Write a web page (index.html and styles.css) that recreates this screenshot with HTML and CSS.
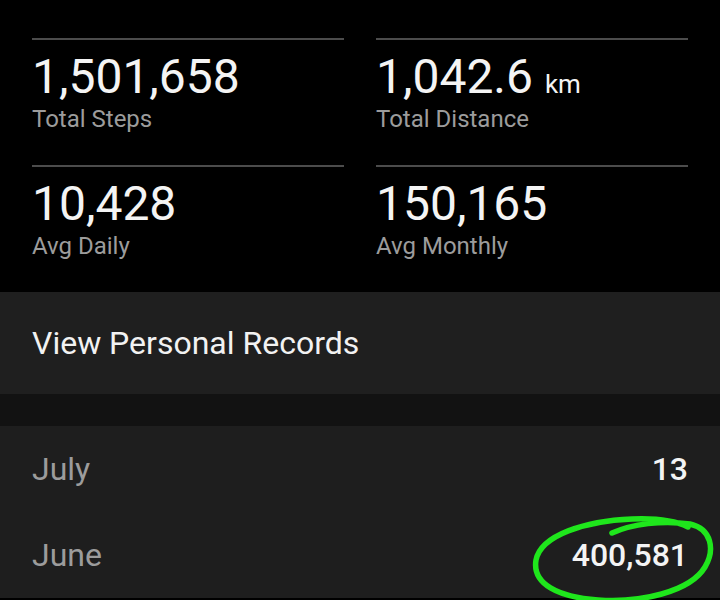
FILE: index.html
```html
<!DOCTYPE html>
<html lang="en">
<head>
<meta charset="utf-8">
<title>Steps Summary</title>
<link rel="stylesheet" href="styles.css">
</head>
<body>
<div class="screen">
  <section class="stats">
    <div class="stat">
      <div class="value">1,501,658</div>
      <div class="label">Total Steps</div>
    </div>
    <div class="stat">
      <div class="value">1,042.6 <span class="unit">km</span></div>
      <div class="label">Total Distance</div>
    </div>
    <div class="stat">
      <div class="value">10,428</div>
      <div class="label">Avg Daily</div>
    </div>
    <div class="stat">
      <div class="value">150,165</div>
      <div class="label">Avg Monthly</div>
    </div>
  </section>
  <div class="records">View Personal Records</div>
  <div class="spacer"></div>
  <ul class="months">
    <li class="month"><span class="name">July</span><span class="count">13</span></li>
    <li class="month"><span class="name">June</span><span class="count">400,581</span></li>
  </ul>
  <svg class="annotation" viewBox="0 0 720 600" width="720" height="600" aria-hidden="true">
    <path d="M612,533 C632,524 662,520 690,524 C712,529 715,550 705,567 C690,592 640,603 598,600 C558,597 532,584 536,560 C541,535 585,521 632,519 C656,518 676,521 688,527" fill="none" stroke="#1fe61c" stroke-width="5.5" stroke-linecap="round" stroke-linejoin="round"/>
  </svg>
</div>
</body>
</html>
```
FILE: styles.css
```css
* { box-sizing: border-box; }
html, body {
  margin: 0;
  padding: 0;
  background: #000;
}
body {
  font-family: Roboto, "Noto Sans", "Liberation Sans", sans-serif;
  color: #f2f2f2;
}
.screen {
  position: relative;
  width: 720px;
  height: 600px;
  overflow: hidden;
  background: #000;
}
.stats {
  display: grid;
  grid-template-columns: 1fr 1fr;
  column-gap: 32px;
  padding: 38px 32px 0;
}
.stat {
  border-top: 2px solid #4c4c4c;
  padding-top: 9px;
  height: 127px;
}
.value {
  font-size: 48px;
  line-height: 56px;
  color: #f4f4f4;
  white-space: nowrap;
}
.unit {
  font-size: 26px;
  line-height: 1;
}
.label {
  margin-top: 1px;
  font-size: 24px;
  line-height: 26px;
  color: #9c9c9c;
}
.records {
  background: #1f1f1f;
  height: 102px;
  padding: 32px 32px 0;
  font-size: 32px;
  line-height: 38px;
  color: #f2f2f2;
}
.spacer {
  height: 32px;
  background: #121212;
}
.months {
  list-style: none;
  margin: 0;
  padding: 0;
  background: #1e1e1e;
}
.month {
  display: flex;
  justify-content: space-between;
  align-items: center;
  height: 86px;
  padding: 0 32px;
}
.name {
  font-size: 32px;
  line-height: 38px;
  color: #9c9c9c;
}
.count {
  font-size: 32px;
  line-height: 38px;
  font-weight: 500;
  color: #f4f4f4;
}
.annotation {
  position: absolute;
  top: 0;
  left: 0;
  pointer-events: none;
}
```
